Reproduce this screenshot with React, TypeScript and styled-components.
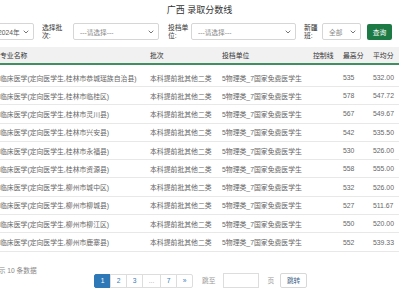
import React from "react"
import styled, { createGlobalStyle } from "styled-components"

const GlobalStyle = createGlobalStyle`
  body {
    margin: 0;
    background: #fff;
    overflow: hidden;
    font-family: "Liberation Sans", "Noto Sans CJK SC", sans-serif;
  }
`

const Page = styled.div`
  width: 399px;
  height: 300px;
  overflow: hidden;
`

const Title = styled.h1`
  margin: 0;
  padding-top: 5px;
  height: 12px;
  line-height: 11px;
  font-size: 9px;
  font-weight: normal;
  color: #333;
  text-align: center;
`

const Filters = styled.div`
  display: flex;
  justify-content: flex-end;
  align-items: center;
  height: 17px;
  margin-top: 6px;
  padding-right: 7px;
  overflow: hidden;
`

const Field = styled.div<{ $gap: number }>`
  display: flex;
  align-items: center;
  flex-shrink: 0;
  margin-right: ${(p) => p.$gap}px;
`

const Label = styled.label<{ $w: number; $space: number }>`
  width: ${(p) => p.$w}px;
  margin-right: ${(p) => p.$space}px;
  font-size: 6.8px;
  line-height: 8px;
  color: #333;
  word-break: break-all;
`

const SelectBox = styled.div<{ $w: number; $muted?: boolean }>`
  box-sizing: border-box;
  width: ${(p) => p.$w}px;
  height: 17px;
  border: 1px solid #d6d6d6;
  border-radius: 2px;
  display: flex;
  align-items: center;
  justify-content: space-between;
  padding: 0 4px 0 6px;
  font-size: 6.7px;
  color: ${(p) => (p.$muted ? "#888" : "#555")};
  background: #fff;
`

const QueryButton = styled.button`
  flex-shrink: 0;
  width: 25px;
  height: 16px;
  padding: 0;
  border: none;
  border-radius: 2px;
  background: #1e7a45;
  color: #fff;
  font-family: inherit;
  font-size: 6.8px;
`

const TableWrap = styled.div`
  margin-top: 7px;
  margin-left: -4px;
  width: 407px;
`

const Table = styled.table`
  width: 407px;
  table-layout: fixed;
  border-collapse: collapse;
  font-size: 6.85px;
`

const Th = styled.th<{ $w: number }>`
  box-sizing: border-box;
  width: ${(p) => p.$w}px;
  height: 17px;
  padding: 0 4px;
  background: #f1f1f1;
  border-bottom: 2px solid #3f8f62;
  color: #333;
  font-weight: normal;
  text-align: left;
  white-space: nowrap;
`

const Row = styled.tr`
  height: 18.3px;
  &:first-child {
    height: 22.5px;
  }
  &:first-child td {
    padding-top: 4px;
  }
`

const Td = styled.td`
  padding: 0 4px;
  border-bottom: 1px solid #e8e8e8;
  color: #666;
  white-space: nowrap;
  overflow: hidden;
`

const Pager = styled.div`
  display: flex;
  align-items: flex-start;
  margin-top: 14px;
  font-size: 6.7px;
`

const Info = styled.div`
  width: 102px;
  margin-left: -8px;
  flex-shrink: 0;
  color: #888;
  line-height: 10px;
  white-space: nowrap;
`

const PageList = styled.div`
  display: flex;
  margin-top: 8px;
`

const PageItem = styled.span<{ $active?: boolean; $w?: number; $dim?: boolean }>`
  box-sizing: border-box;
  width: ${(p) => p.$w ?? 17}px;
  height: 14px;
  margin-left: -1px;
  display: flex;
  align-items: center;
  justify-content: center;
  border: 1px solid ${(p) => (p.$active ? "#2f78b8" : "#ddd")};
  background: ${(p) => (p.$active ? "#2f78b8" : "#fff")};
  color: ${(p) => (p.$active ? "#fff" : p.$dim ? "#aaa" : "#3a7bb8")};
  &:first-child {
    margin-left: 0;
    border-radius: 2px 0 0 2px;
  }
  &:last-child {
    border-radius: 0 2px 2px 0;
  }
`

const Jump = styled.div`
  display: flex;
  align-items: center;
  margin-top: 7px;
  margin-left: 9px;
  color: #999;
`

const JumpInput = styled.div`
  box-sizing: border-box;
  width: 36px;
  height: 15px;
  margin: 0 8px;
  border: 1px solid #ddd;
`

const JumpButton = styled.span`
  box-sizing: border-box;
  height: 15px;
  width: 27px;
  margin-left: 6px;
  display: flex;
  align-items: center;
  justify-content: center;
  border: 1px solid #d8d8d8;
  border-radius: 2px;
  color: #3f5f8a;
`

const Chevron = () => (
  <svg width="6" height="4" viewBox="0 0 6 4">
    <polyline points="0.7,0.7 3,3 5.3,0.7" fill="none" stroke="#666" strokeWidth="0.9" />
  </svg>
)

const cols = [
  { key: "name", label: "专业名称", w: 150 },
  { key: "batch", label: "批次", w: 72 },
  { key: "unit", label: "投档单位", w: 91 },
  { key: "line", label: "控制线", w: 30 },
  { key: "max", label: "最高分", w: 30 },
  { key: "avg", label: "平均分", w: 34 },
]

const places = [
  ["桂林市恭城瑶族自治县", "535", "532.00"],
  ["桂林市临桂区", "578", "547.72"],
  ["桂林市灵川县", "567", "549.67"],
  ["桂林市兴安县", "542", "535.50"],
  ["桂林市永福县", "530", "526.00"],
  ["桂林市资源县", "558", "555.00"],
  ["柳州市城中区", "532", "526.00"],
  ["柳州市柳城县", "527", "511.67"],
  ["柳州市柳江区", "550", "520.00"],
  ["柳州市鹿寨县", "552", "539.33"],
]

export default function App() {
  return (
    <Page>
      <GlobalStyle />
      <Title>广西 录取分数线</Title>
      <Filters>
        <Field $gap={8}>
          <Label $w={22} $space={4}>年份:</Label>
          <SelectBox $w={43}>
            2024年 <Chevron />
          </SelectBox>
        </Field>
        <Field $gap={9}>
          <Label $w={22} $space={9}>选择批次:</Label>
          <SelectBox $w={86} $muted>
            ---请选择--- <Chevron />
          </SelectBox>
        </Field>
        <Field $gap={8}>
          <Label $w={22} $space={1}>投档单位:</Label>
          <SelectBox $w={105} $muted>
            ---请选择--- <Chevron />
          </SelectBox>
        </Field>
        <Field $gap={6}>
          <Label $w={15} $space={3}>新疆班:</Label>
          <SelectBox $w={39} $muted>
            全部 <Chevron />
          </SelectBox>
        </Field>
        <QueryButton>查询</QueryButton>
      </Filters>
      <TableWrap>
        <Table>
          <thead>
            <tr>
              {cols.map((c) => (
                <Th key={c.key} $w={c.w}>
                  {c.label}
                </Th>
              ))}
            </tr>
          </thead>
          <tbody>
            {places.map(([place, max, avg]) => (
              <Row key={place}>
                <Td>临床医学(定向医学生,{place})</Td>
                <Td>本科提前批其他二类</Td>
                <Td>5物理类_7国家免费医学生</Td>
                <Td></Td>
                <Td>{max}</Td>
                <Td>{avg}</Td>
              </Row>
            ))}
          </tbody>
        </Table>
      </TableWrap>
      <Pager>
        <Info>显示 10 条数据</Info>
        <PageList>
          <PageItem $active>1</PageItem>
          <PageItem>2</PageItem>
          <PageItem>3</PageItem>
          <PageItem $w={19} $dim>
            ...
          </PageItem>
          <PageItem>7</PageItem>
          <PageItem>»</PageItem>
        </PageList>
        <Jump>
          跳至
          <JumpInput />
          页
          <JumpButton>跳转</JumpButton>
        </Jump>
      </Pager>
    </Page>
  )
}
